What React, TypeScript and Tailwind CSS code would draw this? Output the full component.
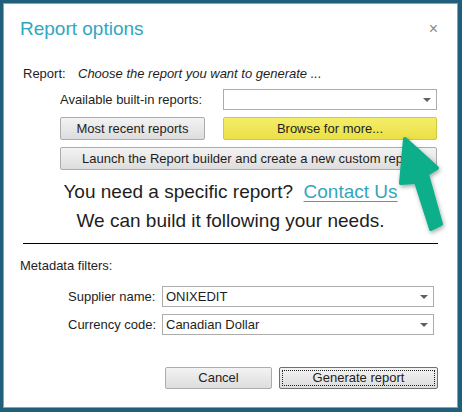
import React from "react";

const font = { fontFamily: '"Liberation Sans", Arial, sans-serif' };

function Combo({ value, className }: { value?: string; className: string }) {
  return (
    <div
      className={`relative flex items-center border border-[#acacac] bg-white pl-[3px] text-[13px] text-[#1e1e1e] ${className}`}
    >
      <span>{value}</span>
      <span className="absolute right-[5px] top-1/2 -translate-y-1/2 h-0 w-0 border-x-[4px] border-t-[4px] border-x-transparent border-t-[#606060]" />
    </div>
  );
}

function Btn({ children, className }: { children: React.ReactNode; className: string }) {
  return (
    <div
      className={`flex items-center justify-center overflow-hidden whitespace-nowrap rounded-[2px] border border-[#acacac] bg-gradient-to-b from-[#f3f3f3] to-[#dddddd] text-[13px] text-[#1e1e1e] ${className}`}
    >
      {children}
    </div>
  );
}

export default function App() {
  return (
    <div style={font} className="h-[412px] w-[462px] bg-[#215e79] pb-[4px] pl-[3px] pr-[4px] pt-[3px]">
      <div className="relative h-full w-full border border-[#9c9c9c] bg-white pl-[16px] pr-[19px]">
        {/* title */}
        <div className="mt-[13px] flex h-[24px] items-center justify-between">
          <span className="text-[19px] leading-[24px] text-[#33a6c0]">Report options</span>
          <span className="text-[16px] leading-none text-[#8a8a8a]">×</span>
        </div>

        {/* Report line */}
        <div className="ml-[3px] mt-[25px] flex h-[16px] items-center text-[13px] leading-[16px] text-[#1e1e1e]">
          <span className="w-[55px]">Report:</span>
          <span className="italic">Choose the report you want to generate ...</span>
        </div>

        {/* available row */}
        <div className="ml-[40px] mt-[7px] flex h-[21px] items-center">
          <span className="w-[163px] text-[13px] text-[#1e1e1e]">Available built-in reports:</span>
          <Combo className="h-[21px] w-[214px]" />
        </div>

        {/* buttons */}
        <div className="ml-[40px] mt-[7px] flex h-[23px] gap-[18px]">
          <Btn className="h-[23px] w-[145px]">Most recent reports</Btn>
          <div className="flex h-[23px] w-[214px] items-center justify-center rounded-[2px] border border-[#d2c746] bg-gradient-to-b from-[#f4ee68] to-[#ebe044] text-[13px] text-[#1e1e1e]">
            Browse for more...
          </div>
        </div>

        <div className="ml-[40px] mt-[7px]">
          <Btn className="h-[23px] w-[377px] justify-start pl-[21px]">
            Launch the Report builder and create a new custom report
          </Btn>
        </div>

        {/* contact */}
        <div className="ml-[3px] mt-[7px] text-center text-[19px] leading-[29px] text-[#1e1e1e]">
          <div>
            You need a specific report?{"\u00a0\u00a0"}
            <span className="text-[#33a6c0] underline decoration-[1px] underline-offset-[3px]">Contact Us</span>
          </div>
          <div>We can build it following your needs.</div>
        </div>

        <div className="ml-[3px] mt-[8px] h-px bg-black" />

        <div className="mt-[14px] text-[13px] leading-[16px] text-[#1e1e1e]">Metadata filters:</div>

        {/* filters */}
        <div className="ml-[48px] mt-[12px] flex flex-col gap-[7px]">
          <div className="flex h-[21px] items-center">
            <span className="w-[94px] text-[13px] text-[#1e1e1e]">Supplier name:</span>
            <Combo value="ONIXEDIT" className="h-[21px] w-[272px]" />
          </div>
          <div className="flex h-[21px] items-center">
            <span className="w-[94px] text-[13px] text-[#1e1e1e]">Currency code:</span>
            <Combo value="Canadian Dollar" className="h-[21px] w-[272px]" />
          </div>
        </div>

        {/* bottom buttons */}
        <div className="ml-[145px] mt-[32px] flex gap-[7px]">
          <Btn className="h-[22px] w-[107px]">Cancel</Btn>
          <div className="flex h-[22px] w-[159px] rounded-[2px] border border-[#707070] bg-gradient-to-b from-[#f3f3f3] to-[#dddddd] p-[2px]">
            <div className="flex flex-1 items-center justify-center border border-dotted border-[#222] text-[13px] text-[#1e1e1e]">
              Generate report
            </div>
          </div>
        </div>

        {/* arrow overlay */}
        <svg className="pointer-events-none absolute left-[376px] top-[121px]" width="80" height="120" viewBox="0 0 80 120">
          <defs>
            <filter id="sh" x="-30%" y="-30%" width="160%" height="160%">
              <feDropShadow dx="1" dy="2" stdDeviation="2" floodColor="#000" floodOpacity="0.35" />
            </filter>
          </defs>
          <g filter="url(#sh)">
            <polygon
              points="25,14 57,43 47,49 61,99 51,104 36,57 21,58"
              fill="#0aae8a"
              strokeLinejoin="round"
              stroke="#0aae8a"
              strokeWidth="4"
            />
          </g>
        </svg>
      </div>
    </div>
  );
}
